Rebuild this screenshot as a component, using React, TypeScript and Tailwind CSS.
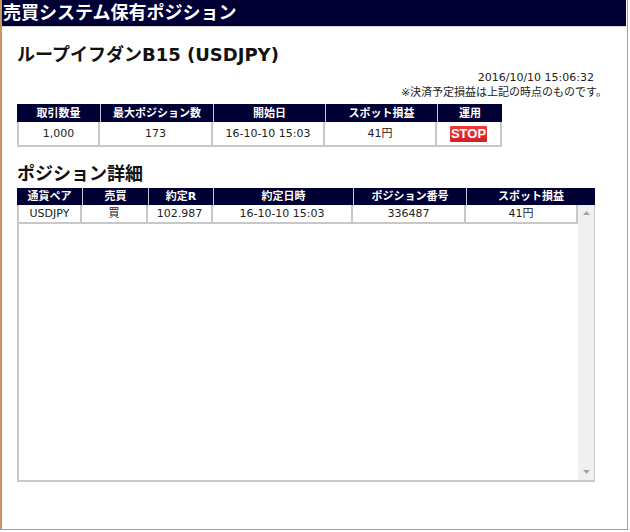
import React from "react";

const font = "font-['DejaVu_Sans','Noto_Sans_CJK_JP',sans-serif]";

export default function App() {
  const hd = "h-full flex items-center justify-center text-white text-[11px] font-bold leading-none";
  const td = "h-full flex items-center justify-center text-[#222] text-[11px] leading-none border-r-2 border-b-2 border-[#c8c8c8]";
  return (
    <div className={`${font} w-[628px] h-[530px] bg-white border-l-2 border-r border-b border-[#c8965f] flex flex-col`}>
      <div className="h-[27px] mr-[1px] bg-[#000035] border-b border-[#d8d8d8] flex items-center">
        <span className="text-white text-[18px] font-bold leading-none pl-[1px]">売買システム保有ポジション</span>
      </div>

      <div className="ml-[15px] mt-[16px] h-[24px] flex items-center text-[18px] font-bold text-[#111] leading-none">
        ループイフダンB15 (USDJPY)
      </div>

      <div className="mt-[3px] flex flex-col items-end text-[11px] text-[#222] leading-[15px]">
        <div className="pr-[33px]">2016/10/10 15:06:32</div>
        <div className="pr-[20px]">※決済予定損益は上記の時点のものです。</div>
      </div>

      <div className="ml-[15px] mt-[4px] w-[485px]">
        <div className="flex h-[18px] bg-[#000035]">
          <div className={`${hd} w-[83px]`}>取引数量</div>
          <div className={`${hd} w-[113px] border-l border-[#c8c8d8]`}>最大ポジション数</div>
          <div className={`${hd} w-[112px] border-l border-[#c8c8d8]`}>開始日</div>
          <div className={`${hd} w-[112px] border-l border-[#c8c8d8]`}>スポット損益</div>
          <div className={`${hd} w-[65px] border-l border-[#c8c8d8]`}>運用</div>
        </div>
        <div className="flex h-[25px]">
          <div className={`${td} w-[83px] border-l-2`}>1,000</div>
          <div className={`${td} w-[113px]`}>173</div>
          <div className={`${td} w-[112px]`}>16-10-10 15:03</div>
          <div className={`${td} w-[112px]`}>41円</div>
          <div className={`${td} w-[65px]`}>
            <span className="w-[37px] h-[16px] flex items-center justify-center bg-gradient-to-b from-[#ee3a3a] to-[#d41e24] text-white text-[13px] font-bold font-['Liberation_Sans',sans-serif] leading-none rounded-[1px]">
              STOP
            </span>
          </div>
        </div>
      </div>

      <div className="ml-[15px] mt-[15px] h-[24px] flex items-center text-[18px] font-bold text-[#111] leading-none">
        ポジション詳細
      </div>

      <div className="ml-[15px] mt-[2px] w-[578px]">
        <div className="flex h-[17px] bg-[#000035]">
          <div className={`${hd} w-[65px]`}>通貨ペア</div>
          <div className={`${hd} w-[66px] border-l border-[#c8c8d8]`}>売買</div>
          <div className={`${hd} w-[65px] border-l border-[#c8c8d8]`}>約定R</div>
          <div className={`${hd} w-[140px] border-l border-[#c8c8d8]`}>約定日時</div>
          <div className={`${hd} w-[113px] border-l border-[#c8c8d8]`}>ポジション番号</div>
          <div className={`${hd} w-[129px] border-l border-[#c8c8d8]`}>スポット損益</div>
        </div>
        <div className="flex h-[277px] border-l-2 border-b-2 border-r border-[#c8c8c8]">
          <div className="flex-1">
            <div className="flex h-[19px]">
              <div className={`${td} w-[63px]`}>USDJPY</div>
              <div className={`${td} w-[66px]`}>買</div>
              <div className={`${td} w-[65px]`}>102.987</div>
              <div className={`${td} w-[140px]`}>16-10-10 15:03</div>
              <div className={`${td} w-[113px]`}>336487</div>
              <div className={`${td} w-[112px]`}>41円</div>
            </div>
          </div>
          <div className="w-[17px] bg-[#f0f0f0] flex flex-col items-center justify-between py-[6px]">
            <svg width="7" height="4" viewBox="0 0 7 4"><path d="M0 4 L3.5 0 L7 4 Z" fill="#a3a3a3" /></svg>
            <svg width="7" height="4" viewBox="0 0 7 4"><path d="M0 0 L3.5 4 L7 0 Z" fill="#a3a3a3" /></svg>
          </div>
        </div>
      </div>
    </div>
  );
}
